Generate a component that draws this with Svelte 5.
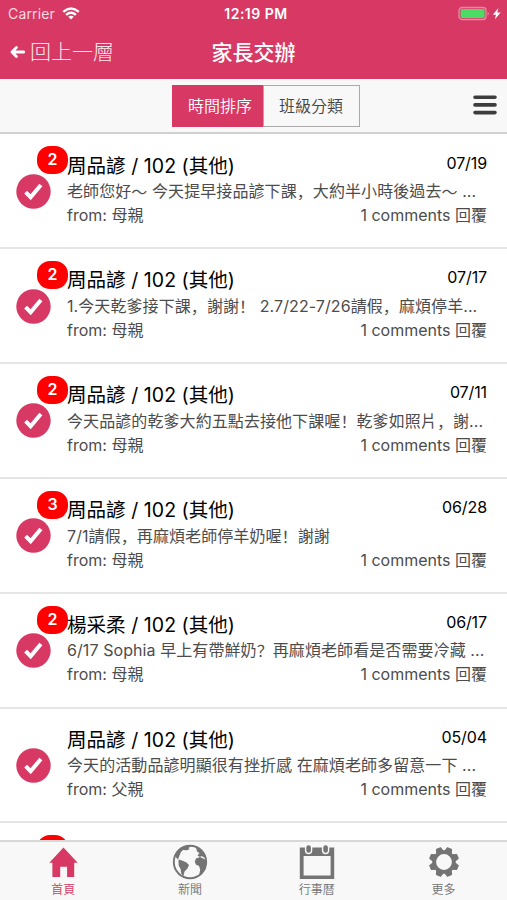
<script>
  const rows = [
    { badge: 2, name: '周品諺', date: '07/19', text: '老師您好～ 今天提早接品諺下課，大約半小時後過去～ ...', from: '母親' },
    { badge: 2, name: '周品諺', date: '07/17', text: '1.今天乾爹接下課，謝謝！ 2.7/22-7/26請假，麻煩停羊...', from: '母親' },
    { badge: 2, name: '周品諺', date: '07/11', text: '今天品諺的乾爹大約五點去接他下課喔！乾爹如照片，謝...', from: '母親' },
    { badge: 3, name: '周品諺', date: '06/28', text: '7/1請假，再麻煩老師停羊奶喔！謝謝', from: '母親' },
    { badge: 2, name: '楊采柔', date: '06/17', text: '6/17 Sophia 早上有帶鮮奶？再麻煩老師看是否需要冷藏 ...', from: '母親' },
    { badge: 0, name: '周品諺', date: '05/04', text: '今天的活動品諺明顯很有挫折感 在麻煩老師多留意一下 ...', from: '父親' }
  ];
  const pieces = (text) => text.split(/([，！？～])/);
</script>

<div class="app">
  <header>
    <div class="status">
      <div class="carrier">
        <span>Carrier</span>
        <svg width="18" height="13" viewBox="0 0 18 13">
          <g fill="none" stroke="#fff" stroke-width="2.4">
            <path d="M1.2 4.8Q9-1.8 16.8 4.8" /><path d="M4.1 7.9Q9 3.6 13.9 7.9" />
          </g>
          <path d="M6.2 9.8Q9 7.6 11.8 9.8L9 12.6Z" fill="#fff" />
        </svg>
      </div>
      <div class="time">12:19 PM</div>
      <svg class="battery" width="45" height="16" viewBox="0 0 45 16">
        <rect x="1" y="1.5" width="27" height="12" rx="3" fill="none" stroke="#e98aa5" stroke-width="1.3" />
        <rect x="2.6" y="3.1" width="24" height="8.8" rx="1.3" fill="#4cd964" />
        <path d="M29.6 5.4Q32 7.5 29.6 9.6Z" fill="#e98aa5" />
        <path d="M40.5 2L34.8 8.7H38L36.8 13.4L42.6 6.5H39.2Z" fill="#fff" />
      </svg>
    </div>
    <div class="nav">
      <div class="back">
        <svg width="15" height="12" viewBox="0 0 15 12"><path d="M6.4 1.6L2 6L6.4 10.4M2.4 6H13.8" fill="none" stroke="#fff" stroke-width="2.8" stroke-linecap="round" stroke-linejoin="round" /></svg>
        <span>回上一層</span>
      </div>
      <h1>家長交辦</h1>
      <div></div>
    </div>
  </header>

  <div class="toolbar">
    <div></div>
    <div class="segments">
      <button class="on">時間排序</button><button>班級分類</button>
    </div>
    <svg class="menu" width="24" height="20" viewBox="0 0 24 20"><path d="M2 2.2H22M2 9.9H22M2 17.6H22" stroke="#3d3d3d" stroke-width="3.6" stroke-linecap="round" /></svg>
  </div>

  <main>
    {#each rows as row}
      <article>
        <div class="mark">
          {#if row.badge}<span class="badge">{row.badge}</span>{/if}
          <svg width="35" height="35" viewBox="0 0 35 35">
            <circle cx="17.5" cy="17.5" r="17.2" fill="#d73964" />
            <path d="M9.6 18.2L14.6 23.2L24.9 11" fill="none" stroke="#fff" stroke-width="4" />
          </svg>
        </div>
        <div class="body">
          <div class="line head"><span>{row.name} / 102 (其他)</span><time>{row.date}</time></div>
          <div class="line preview">{#each pieces(row.text) as piece, i}<span class:punct={i % 2 === 1}>{piece}</span>{/each}</div>
          <div class="line foot"><span>from: {row.from}</span><span class="reply">1 comments 回覆</span></div>
        </div>
      </article>
    {/each}
    <article><div class="mark"><span class="badge"></span></div></article>
  </main>

  <footer>
    <div class="tab active">
      <svg width="36" height="36" viewBox="0 0 36 36"><path d="M18.5 3.5L4.3 18.8H7.4V33H15.2V22.7H22.1V33H29.2V18.8H32.7Z" fill="currentColor" /></svg>
      <span>首頁</span>
    </div>
    <div class="tab">
      <svg width="36" height="36" viewBox="0 0 36 36">
        <circle cx="18" cy="18" r="16.2" fill="none" stroke="currentColor" stroke-width="1.9" />
        <g fill="currentColor">
          <path d="M3 11Q6 4 14 2L19 2.2L16.5 4L17.5 5.5L14 6.2L11 6L9 8L7.5 11.5L6 15.5L4.5 14Z" />
          <path d="M6.5 15.5L10 16.5L14.5 18.5L17 21L15.5 24.5L12.5 27.5L11.5 32Q8.5 30 8.8 25.5L6.7 21.5Z" />
          <path d="M23 2.8Q31.5 6 34 14.5L29.5 12L28 13L25.5 11.5L27.5 9L25 7.5L24.5 5Z" />
          <path d="M24 14.5L28 13L34.2 16Q34.5 25.5 27 32L28.2 25.5L27 22L23.8 20.6L22.8 17.5Z" />
        </g>
      </svg>
      <span>新聞</span>
    </div>
    <div class="tab">
      <svg width="36" height="36" viewBox="0 0 36 36">
        <path d="M.8 3.5H35.2V35H.8ZM4.6 12V31.4H31.6V12Z" fill="currentColor" fill-rule="evenodd" />
        <g fill="currentColor" stroke="#f8f8f8" stroke-width="1.4"><rect x="6.6" y=".5" width="6" height="9" rx="3" /><rect x="23.6" y=".5" width="6" height="9" rx="3" /></g>
      </svg>
      <span>行事曆</span>
    </div>
    <div class="tab">
      <svg width="36" height="36" viewBox="0 0 36 36">
        <g fill="currentColor">
          {#each Array(8) as _, i}
            <path d="M14.6 7.4L15.8 3.4H20.2L21.4 7.4Z" transform="rotate({i * 45 + 22.5} 18 18)" stroke="currentColor" stroke-width="1" stroke-linejoin="round" />
          {/each}
        </g>
        <circle cx="18" cy="18" r="9.8" fill="#f8f8f8" stroke="currentColor" stroke-width="3.8" />
      </svg>
      <span>更多</span>
    </div>
  </footer>
</div>

<style>
  .app {
    width: 507px;
    height: 900px;
    display: flex;
    flex-direction: column;
    overflow: hidden;
    background: #fff;
    font-family: Inter, 'Noto Sans CJK TC', sans-serif;
  }
  header { height: 79px; flex: none; background: #d73964; color: #fff; }
  .status, .nav, .toolbar { display: grid; grid-template-columns: 1fr auto 1fr; align-items: center; }
  .status { height: 27px; font-size: 14px; }
  .carrier { display: flex; gap: 7px; align-items: center; padding-left: 8px; color: #fbd9e2; letter-spacing: .15px; }
  .time { font-weight: 600; font-size: 14px; letter-spacing: .5px; padding-left: 5px; }
  .battery { justify-self: end; margin-right: 4px; }
  .nav { height: 50px; }
  .back { display: flex; align-items: center; gap: 5px; padding-left: 10px; font-size: 21px; line-height: 30px; font-weight: 300; color: #fce4ea; }
  .back span { margin-top: -1px; }
  h1 { margin: 0; padding-top: 1px; font-size: 21px; font-weight: 500; line-height: 30px; }
  .toolbar { height: 55px; flex: none; box-sizing: border-box; background: #f8f8f8; border-bottom: 2px solid #d0d0d0; }
  .segments { display: flex; margin-left: 24px; }
  button { box-sizing: border-box; width: 97px; height: 42px; padding: 0 0 2px; border: 1.5px solid #aaa; background: #f8f8f8; color: #444; font: 350 16px Inter, 'Noto Sans CJK TC', sans-serif; }
  button.on { width: 91px; padding-left: 6px; border-color: #d73964; background: #d73964; color: #fff; }
  .menu { justify-self: end; margin: -2px 10px 0 0; }
  main { flex: 1; min-height: 0; overflow: hidden; padding-top: .4px; }
  article { height: 114.83px; box-sizing: border-box; border-bottom: 2px solid #e5e5e5; display: flex; }
  .mark { position: relative; width: 67px; flex: none; }
  .mark svg { display: block; margin: 39.3px 0 0 16.4px; }
  .badge { position: absolute; left: 37px; top: 12px; width: 31px; height: 28px; line-height: 27px; border-radius: 13px; background: red; color: #fff; font-size: 16px; font-weight: 600; text-align: center; }
  .body { flex: 1; padding: 16.2px 20px 0 0; color: #4c4c4c; font-size: 16px; font-weight: 390; }
  .line { display: flex; justify-content: space-between; white-space: pre; height: 25px; line-height: 25px; }
  .head { height: 28.5px; line-height: 30px; color: #000; font-size: 19.5px; letter-spacing: .05px; }
  .head time { font-size: 16px; line-height: 24.5px; letter-spacing: -.1px; }
  .preview { justify-content: flex-start; height: 24px; letter-spacing: .08px; }
  .punct { font-family: 'Noto Sans CJK SC', sans-serif; }
  footer { height: 60px; box-sizing: border-box; border-top: 2px solid #d8d8d8; flex: none; display: flex; background: #f8f8f8; color: #747474; }
  .tab { flex: 1; display: flex; flex-direction: column; align-items: center; padding-top: 2px; font-size: 12px; line-height: 19px; font-weight: 350; }
  .tab svg { flex: none; }
  .active { color: #d73964; }
</style>
